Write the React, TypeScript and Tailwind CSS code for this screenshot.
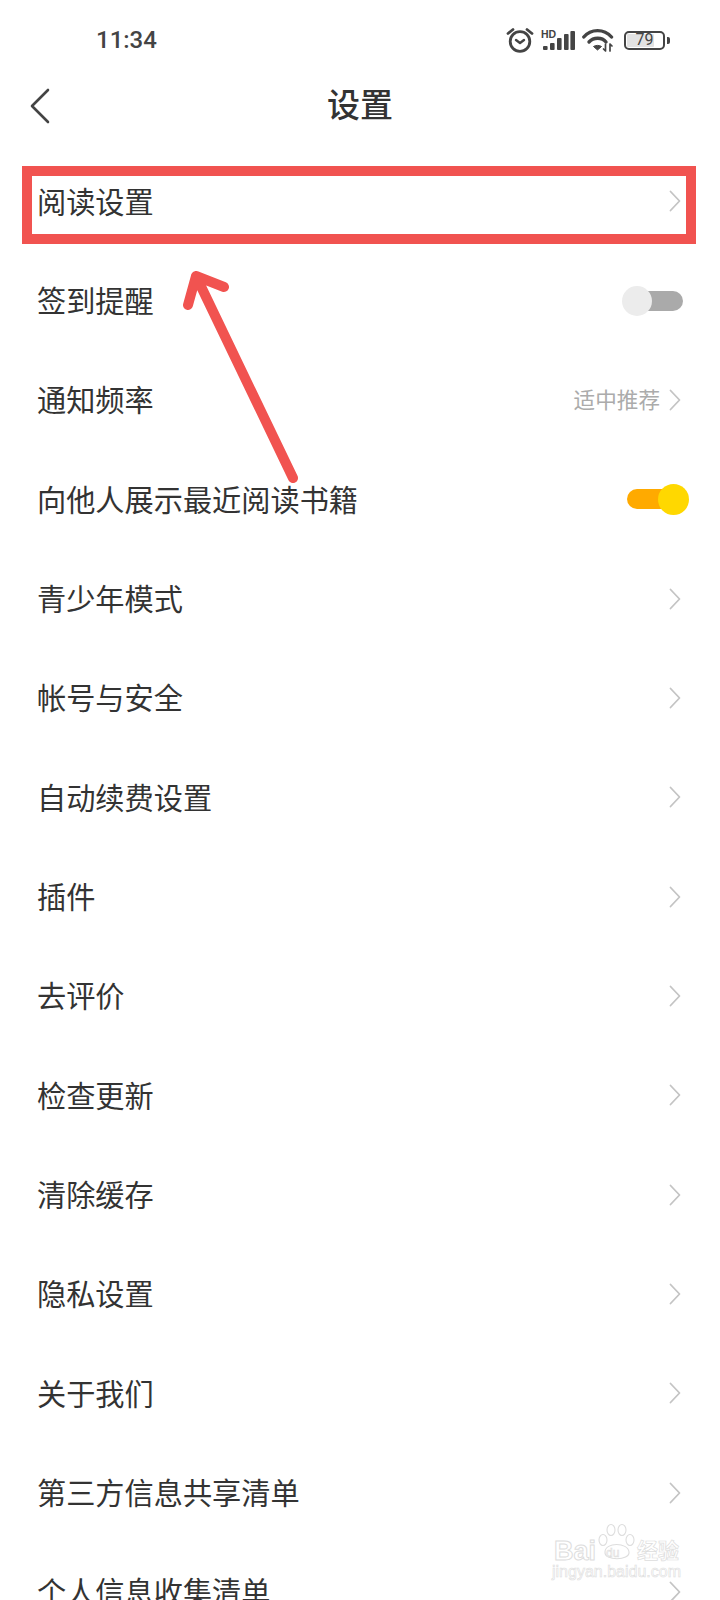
const ROWS: Array<{ label: string; value?: string; toggle?: "on" | "off" }> = [
  { label: "阅读设置" },
  { label: "签到提醒", toggle: "off" },
  { label: "通知频率", value: "适中推荐" },
  { label: "向他人展示最近阅读书籍", toggle: "on" },
  { label: "青少年模式" },
  { label: "帐号与安全" },
  { label: "自动续费设置" },
  { label: "插件" },
  { label: "去评价" },
  { label: "检查更新" },
  { label: "清除缓存" },
  { label: "隐私设置" },
  { label: "关于我们" },
  { label: "第三方信息共享清单" },
  { label: "个人信息收集清单" },
];

function Chevron() {
  return (
    <svg width="12" height="22" viewBox="0 0 12 22" fill="none" className="shrink-0">
      <path d="M1.5 1.5 L10.5 11 L1.5 20.5" stroke="#c4c4c4" strokeWidth="1.8" strokeLinecap="round" strokeLinejoin="round" />
    </svg>
  );
}

function StatusIcons() {
  return (
    <div className="flex items-center">
      {/* alarm */}
      <svg width="28" height="26" viewBox="0 0 28 26" fill="none" className="mr-[7px]">
        <circle cx="14" cy="14.5" r="9.8" stroke="#444" strokeWidth="2.8" />
        <path d="M10 13 L14 16 L18 13" stroke="#444" strokeWidth="2.4" strokeLinecap="round" strokeLinejoin="round" />
        <path d="M2 6.5 L7 2.5 M26 6.5 L21 2.5" stroke="#444" strokeWidth="2.8" strokeLinecap="round" />
      </svg>
      {/* signal */}
      <div className="relative w-[34px] h-[21px] mr-[7px]">
        <span className="absolute left-0 top-[-1px] text-[10.5px] leading-[10px] font-bold text-[#444] font-['Liberation_Sans',sans-serif]">HD</span>
        <svg width="34" height="21" viewBox="0 0 34 21" className="absolute left-0 top-0">
          <rect x="2" y="16" width="4.6" height="4" rx="1" fill="#444" />
          <rect x="9" y="13" width="4.6" height="7" rx="1" fill="#444" />
          <rect x="16" y="8" width="4.6" height="12" rx="1" fill="#444" />
          <rect x="23" y="4" width="4.6" height="16" rx="1" fill="#444" />
          <rect x="29.4" y="1" width="4.6" height="19" rx="1" fill="#444" />
        </svg>
      </div>
      {/* wifi */}
      <svg width="32" height="24" viewBox="0 0 32 24" fill="none" className="mr-[10px]">
        <path d="M1.8 9 C9 0.5 22 0.5 29.5 9" stroke="#444" strokeWidth="3.4" strokeLinecap="round" />
        <path d="M7 14 C11.5 9 20 9 24 14" stroke="#444" strokeWidth="3.4" strokeLinecap="round" />
        <path d="M11.5 18.5 C13.5 17 17.5 17 19.5 18.5 L15.5 22 Z" fill="#444" stroke="#444" strokeWidth="1" strokeLinejoin="round" />
        <path d="M23.5 16 V23 L21.5 21 M28 16 V23 M28 16 L30 18" stroke="#444" strokeWidth="1.7" strokeLinecap="round" strokeLinejoin="round" />
      </svg>
      {/* battery */}
      <div className="w-[41px] h-[19px] rounded-[5px] border-[2px] border-[#444] p-[1px] relative">
        <div className="h-full w-[76%] bg-[#e2e2e2] rounded-[1px]" />
        <span className="absolute inset-0 flex items-center justify-center text-[16px] leading-none text-[#444] font-['Roboto',sans-serif]">79</span>
      </div>
      <div className="w-[3px] h-[7px] rounded-r-[2px] bg-[#444] ml-[2px]" />
    </div>
  );
}

function Row({ label, value, toggle }: { label: string; value?: string; toggle?: "on" | "off" }) {
  return (
    <div className="h-[99.35px] pl-[37px] pr-[39px] flex items-center justify-between shrink-0">
      <span className="text-[29.2px] leading-none text-[#333] pb-[2px]">{label}</span>
      {toggle === "off" && (
        <div className="relative w-[61px] h-[30px] mr-[-2px] flex items-center">
          <div className="w-full h-[20px] rounded-full bg-[#aaaaaa] ml-[10px]" />
          <div className="absolute left-0 top-0 w-[30px] h-[30px] rounded-full bg-[#ececec]" />
        </div>
      )}
      {toggle === "on" && (
        <div className="relative w-[62px] h-[31px] mr-[-8px] flex items-center">
          <div className="w-[50px] h-[20px] rounded-full bg-[#ffaa00]" />
          <div className="absolute right-0 top-0 w-[31px] h-[31px] rounded-full bg-[#ffd800]" />
        </div>
      )}
      {!toggle && (
        <div className="flex items-center gap-[9px]">
          {value && <span className="text-[21.6px] leading-none text-[#ababab] pb-[2px]">{value}</span>}
          <Chevron />
        </div>
      )}
    </div>
  );
}

export default function App() {
  return (
    <div className="relative w-[720px] h-[1600px] overflow-hidden bg-white font-['Noto_Sans_CJK_SC','Noto_Sans',sans-serif]">
      {/* status bar */}
      <div className="h-[76px] pl-[96px] pr-[50px] pt-[4px] flex items-center justify-between">
        <span className="text-[24px] leading-none font-medium text-[#444] font-['Roboto',sans-serif]">11:34</span>
        <StatusIcons />
      </div>

      {/* header */}
      <div className="relative h-[60px] flex items-center justify-center">
        <svg width="20" height="36" viewBox="0 0 20 36" fill="none" className="absolute left-[30px] top-[12px]">
          <path d="M18 2 L2 18 L18 34" stroke="#444" strokeWidth="2.6" strokeLinecap="round" strokeLinejoin="round" />
        </svg>
        <span className="text-[33px] leading-none font-medium text-[#333] mb-[5px]">设置</span>
      </div>

      {/* list */}
      <div className="pt-[15.5px] flex flex-col">
        {ROWS.map(r => (
          <Row key={r.label} {...r} />
        ))}
      </div>

      {/* annotation over the screenshot */}
      <div className="absolute left-[22px] top-[166px] w-[674px] h-[78px] border-[10px] border-[#f15350]" />
      <svg width="720" height="600" viewBox="0 0 720 600" fill="none" className="absolute left-0 top-0 pointer-events-none">
        <path d="M293 478 L196 276 M188 305 L196 276 L224 287" stroke="#f15350" strokeWidth="10" strokeLinecap="round" strokeLinejoin="round" />
      </svg>

      {/* watermark */}
      <div className="absolute left-[552px] top-[1523px] w-[130px] h-[62px]">
        <svg width="40" height="40" viewBox="0 0 40 40" fill="none" className="absolute left-[45px] top-0">
          <g stroke="#dddddd" strokeWidth="1.1" fill="#ffffff">
            <ellipse cx="6" cy="17" rx="4" ry="5.5" />
            <ellipse cx="14" cy="7" rx="4" ry="5.5" />
            <ellipse cx="25" cy="7" rx="4" ry="5.5" />
            <ellipse cx="33" cy="17" rx="4" ry="5.5" />
            <path d="M8 29 C8 19 31 19 32 29 C33 38 7 38 8 29 Z" />
          </g>
        </svg>
        <span className="absolute left-[2px] top-[15px] text-[27px] leading-none font-bold text-white [-webkit-text-stroke:1px_#dddddd] font-['Liberation_Sans',sans-serif]">Bai</span>
        <span className="absolute left-[54px] top-[24px] text-[12px] leading-none text-white [-webkit-text-stroke:0.6px_#dddddd] font-['Liberation_Sans',sans-serif]">du</span>
        <span className="absolute left-[85px] top-[16px] text-[21px] leading-none font-bold text-white [-webkit-text-stroke:0.7px_#dddddd]">经验</span>
        <span className="absolute left-0 top-[41px] text-[16px] leading-none text-white [-webkit-text-stroke:0.6px_#dddddd] font-['Liberation_Sans',sans-serif]">jingyan.baidu.com</span>
      </div>
    </div>
  );
}
